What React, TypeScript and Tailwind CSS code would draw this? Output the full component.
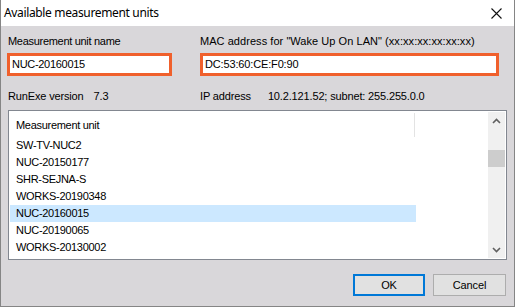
import React from "react";

const units = [
  "SW-TV-NUC2",
  "NUC-20150177",
  "SHR-SEJNA-S",
  "WORKS-20190348",
  "NUC-20160015",
  "NUC-20190065",
  "WORKS-20130002",
];

const selected = "NUC-20160015";

function Chevron({ down }: { down?: boolean }) {
  return (
    <svg width="9" height="6" viewBox="0 0 9 6" className={down ? "rotate-180" : ""}>
      <path d="M1 5 L4.5 1.5 L8 5" fill="none" stroke="#606060" strokeWidth="1.6" />
    </svg>
  );
}

export default function App() {
  return (
    <div className="w-[515px] h-[307px] flex flex-col bg-[#d9d7da] border-x border-b border-[#858585] font-['Liberation_Sans',Arial,sans-serif] text-black overflow-hidden">
      {/* Title bar */}
      <div className="h-[26px] shrink-0 bg-white flex items-center justify-between pl-[3px] pr-[12px]">
        <span className="text-[12px] font-['Noto_Sans','Liberation_Sans',sans-serif] tracking-[-0.35px]">
          Available measurement units
        </span>
        <svg width="11" height="11" viewBox="0 0 11 11">
          <path d="M0.5 0.5 L10.5 10.5 M10.5 0.5 L0.5 10.5" stroke="#111" strokeWidth="1.1" />
        </svg>
      </div>

      {/* Body */}
      <div className="flex-1 flex flex-col pl-[6px] pr-[7px] pt-[8px] text-[11px] tracking-[-0.15px]">
        <div className="grid grid-cols-[193px_1fr] leading-[14px]">
          <div className="pl-[1px] tracking-[-0.3px]">Measurement unit name</div>
          <div className="tracking-[0.05px]">MAC address for "Wake Up On LAN" (xx:xx:xx:xx:xx:xx)</div>
        </div>

        <div className="grid grid-cols-[193px_1fr] mt-[5px]">
          <div className="w-[165px] h-[23px] border-[3px] border-[#f0602c] bg-white flex items-center pl-[2px] tracking-[-0.3px]">
            NUC-20160015
          </div>
          <div className="w-[299px] h-[23px] border-[3px] border-[#f0602c] bg-white flex items-center pl-[2px]">
            DC:53:60:CE:F0:90
          </div>
        </div>

        <div className="grid grid-cols-[193px_1fr] mt-[13px] leading-[14px]">
          <div className="pl-[1px] flex gap-[10px]">
            <span>RunExe version</span>
            <span>7.3</span>
          </div>
          <div className="flex gap-[17px]">
            <span>IP address</span>
            <span>10.2.121.52; subnet: 255.255.0.0</span>
          </div>
        </div>

        {/* List */}
        <div className="mt-[7px] ml-[1px] w-[499px] h-[150px] shrink-0 border border-[#828790] bg-white flex tracking-[-0.3px]">
          <div className="flex-1 flex flex-col overflow-hidden pl-[1px]">
            <div className="h-[26px] shrink-0 flex">
              <div className="w-[405px] flex items-center pl-[6px] border-r border-[#e3e3e3] mt-[2px]">
                Measurement unit
              </div>
            </div>
            {units.map((u) => (
              <div
                key={u}
                className={
                  "h-[17px] shrink-0 w-[406px] flex items-center pl-[6px] " +
                  (u === selected ? "bg-[#cce8ff]" : "")
                }
              >
                {u}
              </div>
            ))}
          </div>
          <div className="w-[17px] my-[1px] mr-[1px] bg-[#f0f0f0] flex flex-col">
            <div className="h-[17px] flex items-center justify-center">
              <Chevron />
            </div>
            <div className="h-[21px]" />
            <div className="h-[17px] bg-[#cdcdcd]" />
            <div className="flex-1" />
            <div className="h-[17px] flex items-center justify-center">
              <Chevron down />
            </div>
          </div>
        </div>

        {/* Buttons */}
        <div className="mt-[14px] flex justify-end gap-[8px] pr-[1px]">
          <button className="w-[72px] h-[22px] border-2 border-[#0078d7] bg-[#e1e1e1] text-[11px] flex items-center justify-center">
            OK
          </button>
          <button className="w-[73px] h-[22px] border border-[#adadad] bg-[#e1e1e1] text-[11px] flex items-center justify-center">
            Cancel
          </button>
        </div>
      </div>
    </div>
  );
}
